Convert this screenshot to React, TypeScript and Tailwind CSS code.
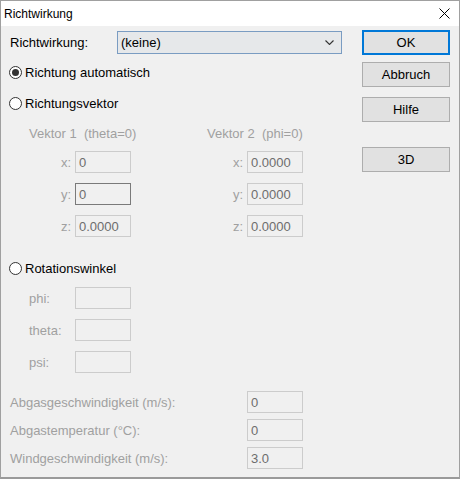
import React from "react";

const Radio = ({ checked, label }: { checked?: boolean; label: string }) => (
  <div className="flex items-center h-[16px] pl-[8px]">
    <span className="w-[13px] h-[13px] rounded-full border border-[#333333] bg-white flex items-center justify-center">
      {checked && <span className="w-[7px] h-[7px] rounded-full bg-[#333333]" />}
    </span>
    <span className="ml-[3px] text-black">{label}</span>
  </div>
);

const Field = ({ value, focus }: { value?: string; focus?: boolean }) => (
  <div
    className={`w-[56px] h-[22px] border ${
      focus ? "border-[#7a7a7a]" : "border-[#cccccc]"
    } bg-[#f0f0f0] flex items-center pl-[3px] text-[#6d6d6d]`}
  >
    {value}
  </div>
);

const Button = ({ label, primary }: { label: string; primary?: boolean }) => (
  <div
    className={`h-[25px] w-full flex items-center justify-center bg-[#e1e1e1] text-black ${
      primary ? "border-2 border-[#0078d7]" : "border border-[#adadad]"
    }`}
  >
    {label}
  </div>
);

const vectorRows = [
  { axis: "x", a: "0", b: "0.0000" },
  { axis: "y", a: "0", b: "0.0000", focus: true },
  { axis: "z", a: "0.0000", b: "0.0000" },
];

const exhaustRows = [
  { label: "Abgasgeschwindigkeit (m/s):", value: "0" },
  { label: "Abgastemperatur (°C):", value: "0" },
  { label: "Windgeschwindigkeit (m/s):", value: "3.0" },
];

export default function App() {
  return (
    <div className="w-[460px] h-[479px] border border-[#a0a0a0] border-b-2 border-b-[#9a9a9a] bg-[#f0f0f0] flex flex-col font-['Liberation_Sans',Arial,sans-serif] text-[13px] leading-none select-none">
      {/* title bar */}
      <div className="h-[25px] bg-white flex items-center justify-between pl-[3px] pr-[9px]">
        <span className="text-[12px] text-black">Richtwirkung</span>
        <svg width="11" height="11" viewBox="0 0 11 11" fill="none" stroke="#000" strokeWidth="1">
          <path d="M0.5 0.5 L10.5 10.5 M10.5 0.5 L0.5 10.5" />
        </svg>
      </div>

      <div className="flex flex-1">
        {/* left side */}
        <div className="flex-1 flex flex-col">
          <div className="flex items-center h-[23px] mt-[5px]">
            <span className="w-[116px] pl-[9px] text-black">Richtwirkung:</span>
            <div className="w-[225px] h-[23px] border border-[#7a9cc2] bg-[#e6e8ea] flex items-center justify-between pl-[3px] pr-[7px] text-black">
              <span>(keine)</span>
              <svg width="9" height="5" viewBox="0 0 9 5" fill="none" stroke="#333" strokeWidth="1.1">
                <path d="M0.5 0.5 L4.5 4.5 L8.5 0.5" />
              </svg>
            </div>
          </div>

          <div className="mt-[10px]">
            <Radio checked label="Richtung automatisch" />
          </div>
          <div className="mt-[15px]">
            <Radio label="Richtungsvektor" />
          </div>

          <div className="flex items-center h-[16px] mt-[14px] text-[#a0a0a0] whitespace-pre">
            <span className="w-[206px] pl-[28px]">Vektor 1  (theta=0)</span>
            <span>Vektor 2  (phi=0)</span>
          </div>

          <div className="flex flex-col gap-[10px] mt-[10px]">
            {vectorRows.map((r) => (
              <div key={r.axis} className="flex items-center h-[22px]">
                <span className="w-[70px] text-right text-[#a0a0a0] mr-[4px]">{r.axis}:</span>
                <Field value={r.a} focus={r.focus} />
                <span className="w-[112px] text-right text-[#a0a0a0] mr-[4px]">{r.axis}:</span>
                <Field value={r.b} />
              </div>
            ))}
          </div>

          <div className="mt-[23px]">
            <Radio label="Rotationswinkel" />
          </div>

          <div className="flex flex-col gap-[10px] mt-[11px]">
            {["phi:", "theta:", "psi:"].map((l) => (
              <div key={l} className="flex items-center h-[22px]">
                <span className="w-[74px] pl-[28px] text-[#a0a0a0]">{l}</span>
                <Field />
              </div>
            ))}
          </div>

          <div className="flex flex-col gap-[6px] mt-[18px]">
            {exhaustRows.map((r) => (
              <div key={r.label} className="flex items-center h-[22px]">
                <span className="w-[246px] pl-[9px] text-[#a0a0a0]">{r.label}</span>
                <Field value={r.value} />
              </div>
            ))}
          </div>
        </div>

        {/* buttons */}
        <div className="w-[88px] mr-[9px] flex flex-col pt-[4px]">
          <Button label="OK" primary />
          <div className="mt-[7px]">
            <Button label="Abbruch" />
          </div>
          <div className="mt-[10px]">
            <Button label="Hilfe" />
          </div>
          <div className="mt-[25px]">
            <Button label="3D" />
          </div>
        </div>
      </div>
    </div>
  );
}
